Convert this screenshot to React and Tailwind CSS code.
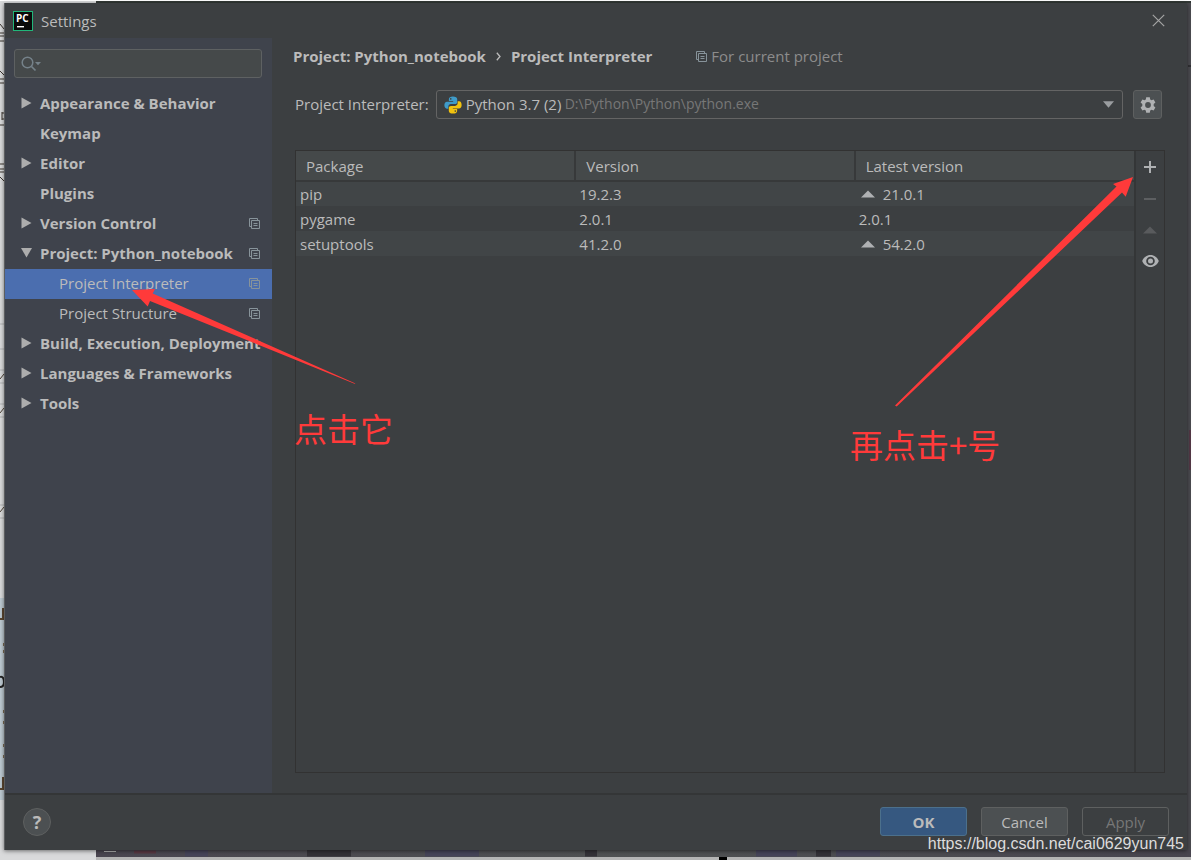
import { useState } from "react";

const TREE = [
  { label: "Appearance & Behavior", arrow: "right" },
  { label: "Keymap" },
  { label: "Editor", arrow: "right" },
  { label: "Plugins" },
  { label: "Version Control", arrow: "right", copy: true },
  { label: "Project: Python_notebook", arrow: "down", copy: true },
  { label: "Project Interpreter", child: true, copy: true },
  { label: "Project Structure", child: true, copy: true },
  { label: "Build, Execution, Deployment", arrow: "right" },
  { label: "Languages & Frameworks", arrow: "right" },
  { label: "Tools", arrow: "right" },
];

const PACKAGES = [
  { name: "pip", version: "19.2.3", latest: "21.0.1", upgrade: true },
  { name: "pygame", version: "2.0.1", latest: "2.0.1", upgrade: false },
  { name: "setuptools", version: "41.2.0", latest: "54.2.0", upgrade: true },
];

function CopyIcon() {
  return (
    <svg width="11" height="11" viewBox="0 0 11 11" fill="none" stroke="#87939a" className="shrink-0" aria-hidden="true">
      <path d="M2.5 8.5H.5V.5H8.5V2.5" />
      <path d="M2.5 2.5H10.5V10.5H2.5Z" />
      <path d="M4.5 5.5H8.5M4.5 7.5H8.5" />
    </svg>
  );
}

function TreeArrow({ direction }) {
  return (
    <svg width="12" height="12" viewBox="0 0 12 12" fill="#adadad" className="shrink-0" aria-hidden="true">
      {direction === "right" && <path d="M1.500 .5L11.500 6L1.500 11.500Z" />}
      {direction === "down" && <path d="M1 1H12L6.500 10.500Z" />}
    </svg>
  );
}

function PyCharmLogo() {
  return (
    <svg width="20" height="20" viewBox="0 0 20 20" aria-hidden="true">
      <rect width="20" height="20" fill="#21b67a" />
      <rect x="1" y="1" width="18" height="18" fill="#0a0a0a" />
      <text x="3" y="11" fill="#fff" fontSize="10" fontWeight="700" fontFamily="Open Sans, sans-serif">PC</text>
      <rect x="4" y="15" width="7" height="1.4" fill="#fff" />
    </svg>
  );
}

function PythonLogo() {
  return (
    <svg width="18" height="18" viewBox="0 0 24 24" className="shrink-0" aria-hidden="true">
      <path fill="#3f9bc9" d="M11.9.6C8.5.6 6.5 1.8 6.5 4V6.6H12.2V7.5H4C1.8 7.5.5 9.3.5 12.1s1.2 4.8 3.3 4.8h2v-2.7c0-2 1.5-3.4 3.4-3.4h5.5c1.7 0 2.9-1.2 2.9-2.9V4c0-2.2-2.2-3.4-5.7-3.4Z" />
      <path fill="#f2c30f" d="M12.1 23.4c3.4 0 5.4-1.2 5.4-3.4v-2.6h-5.7v-.9H20c2.2 0 3.5-1.8 3.5-4.6S22.3 7.1 20.2 7.1h-2v2.7c0 2-1.5 3.4-3.4 3.4H9.3c-1.7 0-2.9 1.2-2.9 2.9V20c0 2.2 2.2 3.4 5.7 3.4Z" />
      <circle cx="9" cy="3.9" r="1.1" fill="#3c3f41" />
      <circle cx="15" cy="20.1" r="1.1" fill="#3c3f41" />
    </svg>
  );
}

function GearIcon() {
  return (
    <svg width="16" height="16" viewBox="0 0 16 16" fill="#afb1b3" fillRule="evenodd" aria-hidden="true">
      <path d="M6.2 .3H9.8L10.2 2.5L11.5 3.2L13.6 2.4L15.4 5.5L13.7 7V9L15.4 10.5L13.6 13.6L11.5 12.8L10.2 13.5L9.8 15.7H6.2L5.8 13.5L4.5 12.8L2.4 13.6L.6 10.5L2.3 9V7L.6 5.5L2.4 2.4L4.5 3.2L5.8 2.5ZM8 5.1A2.9 2.9 0 1 0 8 10.9A2.9 2.9 0 1 0 8 5.1Z" />
    </svg>
  );
}

function UpTriangle({ className }) {
  return (
    <svg width="14" height="8" viewBox="0 0 14 8" className={className} aria-hidden="true">
      <path fill="currentColor" d="M7 .5L14 7.5H0Z" />
    </svg>
  );
}

function Backdrop() {
  return (
    <div className="absolute inset-0 overflow-hidden bg-[#d9dadb]" aria-hidden="true">
      <div className="absolute right-0 top-0 bottom-[3px] left-24 bg-[#4a4a4f]" />
      <div className="absolute bottom-[3px] left-24 right-0 h-[7px] bg-linear-to-r from-[#4a4650] via-[#505253] to-[#48454f]" />
      <div className="absolute bottom-0 left-24 right-0 h-[3px] bg-[#b4b4b4]" />
      <div className="absolute top-0 left-24 right-0 h-[3px] bg-[#323835]" />
      <div className="absolute top-0 left-0 right-0 h-px bg-white" />
      <div className="absolute top-[598px] left-0 h-[202px] w-1 bg-[#bcc8d0]" />
      <svg className="absolute inset-0 h-full w-full" fill="none">
        <path stroke="#3b342f" d="M0 24L4 29M0 33H4M0 36H4M0 41H4M0 71L4 75M0 79H4M0 83H4M2 112V120M2 113H5M2 119H5M0 125H4M0 164H4M0 169H4M0 172H4M0 177L4 181" />
        <path stroke="#b0b2b4" d="M0 324H4M0 349H4M0 370H4M0 383H4M0 404H4M0 417H4M0 505H4M0 518H4" />
        <path stroke="#4b4036" d="M0 379L4 374M0 413L4 408M0 512L4 507" />
        <path stroke="#5a4630" strokeWidth="2" d="M0 619H4M3 608V620M0 789H4M3 777V789" />
        <path stroke="#7a6a52" d="M3.500 643V646M3.500 650V653M3.500 710V713M3.500 721V724M3.500 744V747M3.500 755V758" />
        <path stroke="#222" strokeWidth="2" d="M0 677C3 676 4 679 4 682S3 687 0 687" />
        <path stroke="#b0b0b0" d="M104 851.5H116" />
        <path stroke="#593843" strokeWidth="3" d="M134 852H156" />
        <path stroke="#533846" strokeWidth="2" d="M1190 430V470" />
        <path stroke="#343238" strokeWidth="7" d="M307 853H351M585 853H597M816 853H831" />
        <path stroke="#464459" strokeWidth="7" d="M185 853H208M425 853H479M756 853H797M836 853H880" />
        <path stroke="#161618" d="M1188 66H1191" />
        <path stroke="#000" strokeWidth="3" d="M719 858.5H727" />
      </svg>
    </div>
  );
}

function Annotations() {
  return (
    <>
      <svg className="pointer-events-none absolute inset-0 h-full w-full" fill="#ff3a3a" aria-hidden="true">
        <path d="M132 290L155 289L152.7 293.5L355.5 383.5L354.5 383.7L150 301L147.7 306.5Z" />
        <path d="M1133 177L1113 184L1116.5 186.5L895 405.5L896.7 406.5L1122 192.5L1125.7 196.7Z" />
      </svg>
      <p className="pointer-events-none absolute left-[294px] top-[408px] font-['Noto_Sans_CJK_SC',sans-serif] text-[33px] leading-10 text-[#ff3a3a]">点击它</p>
      <p className="pointer-events-none absolute left-[850px] top-[424px] font-['Noto_Sans_CJK_SC',sans-serif] text-[33px] leading-10 text-[#ff3a3a]">再点击+号</p>
      <p className="pointer-events-none absolute bottom-1.5 right-[7px] font-['Liberation_Sans',sans-serif] text-base leading-5 text-[#dcdcdc]">
        https://blog.csdn.net/cai0629yun745
      </p>
    </>
  );
}

function Sidebar({ selected, onSelect }) {
  return (
    <aside className="flex w-[267px] shrink-0 flex-col bg-[#3f434c] pt-[11px]">
      <label className="ml-[9px] mr-2.5 flex h-[29px] items-center rounded-[3px] border border-[#5e6162] bg-[#45494a] px-1.5">
        <svg width="21" height="16" viewBox="0 0 21 16" fill="none" className="shrink-0" aria-hidden="true">
          <circle cx="6.5" cy="6.5" r="5.3" stroke="#75828a" strokeWidth="1.5" />
          <path d="M10.5 10.5L14.5 14.5" stroke="#75828a" strokeWidth="1.7" />
          <path d="M14 6H20L17 9.2Z" fill="#75828a" />
        </svg>
        <input type="text" aria-label="Search settings" className="w-full min-w-0 bg-transparent pl-1 outline-none" />
      </label>
      <nav className="mt-[11px] flex flex-col">
        {TREE.map((item) => (
          <button
            key={item.label}
            type="button"
            onClick={() => onSelect(item.label)}
            className={
              "flex h-[30px] items-center gap-2 whitespace-nowrap pb-0.5 pr-3 text-left " +
              (item.child ? "pl-[54px] " : "pl-[15px] font-bold ") +
              (selected === item.label ? "bg-[#4b6eaf]" : "")
            }
          >
            {!item.child && <TreeArrow direction={item.arrow} />}
            <span className="min-w-0 flex-1">{item.label}</span>
            {item.copy && <CopyIcon />}
          </button>
        ))}
      </nav>
    </aside>
  );
}

function PackageTable() {
  return (
    <div className="flex flex-1 border border-[#323232]">
      <div className="flex-1 border-r-2 border-[#343637]">
        <table className="w-full table-fixed border-collapse text-left">
          <thead>
            <tr className="h-[30px] border-b-2 border-[#37393a] bg-[#45494a]">
              <th className="border-r-2 border-[#37393a] pl-2.5 font-normal">Package</th>
              <th className="border-r-2 border-[#37393a] pl-2.5 font-normal">Version</th>
              <th className="pl-2.5 font-normal">Latest version</th>
            </tr>
          </thead>
          <tbody>
            {PACKAGES.map((p) => (
              <tr key={p.name} className="h-[25px] odd:bg-[#414547]">
                <td className="pl-1">{p.name}</td>
                <td className="pl-1">{p.version}</td>
                <td className="pl-1">
                  <span className="flex items-center gap-2">
                    {p.upgrade && <UpTriangle className="ml-0.5 text-[#afb1b3]" />}
                    {p.latest}
                  </span>
                </td>
              </tr>
            ))}
          </tbody>
        </table>
      </div>
      <div className="flex w-7 flex-col items-center">
        <button type="button" aria-label="Install" className="flex h-8 w-full items-center justify-center">
          <svg width="12" height="12" viewBox="0 0 12 12" fill="#afb1b3" aria-hidden="true"><path d="M5 0H7V5H12V7H7V12H5V7H0V5H5Z" /></svg>
        </button>
        <button type="button" aria-label="Uninstall" className="flex h-[31px] w-full items-center justify-center">
          <svg width="12" height="2" viewBox="0 0 12 2" fill="#5d5f61" aria-hidden="true"><path d="M0 0H12V2H0Z" /></svg>
        </button>
        <button type="button" aria-label="Upgrade" className="flex h-8 w-full items-center justify-center">
          <UpTriangle className="text-[#595b5d]" />
        </button>
        <button type="button" aria-label="Show early releases" className="flex h-[30px] w-full items-center justify-center">
          <svg width="17" height="12" viewBox="0 0 17 12" fill="none" aria-hidden="true">
            <path fill="#afb1b3" fillRule="evenodd" d="M8.5 0C4.7 0 1.6 2.4 .2 6C1.6 9.6 4.7 12 8.5 12S15.4 9.6 16.8 6C15.4 2.4 12.3 0 8.5 0ZM8.5 1.7A4.3 4.3 0 1 1 8.5 10.3A4.3 4.3 0 1 1 8.5 1.7Z" />
            <circle cx="8.5" cy="6" r="2.5" fill="#afb1b3" />
          </svg>
        </button>
      </div>
    </div>
  );
}

export default function App() {
  const [selected, setSelected] = useState("Project Interpreter");
  return (
    <div className="flex min-h-screen bg-white pb-[3px] pr-[3px] font-['Open_Sans','Noto_Sans_CJK_SC',sans-serif] text-[15px] leading-5 text-[#bbbbbb]">
      <div className="relative flex flex-1 pb-2.5 pl-1 pr-1 pt-[3px]">
        <Backdrop />
        <div className="relative flex min-w-0 flex-1 flex-col border-l border-[#5c5e60] bg-[#3c3f41] shadow-[0_1px_4px_rgba(0,0,0,0.5)]">
          <header className="flex h-[35px] items-center gap-2 pl-2 pr-[22px]">
            <PyCharmLogo />
            <h1 className="flex-1">Settings</h1>
            <button type="button" aria-label="Close">
              <svg width="13" height="13" viewBox="0 0 13 13" stroke="#a4a4a4" strokeWidth="1.2" aria-hidden="true"><path d="M.8 .8L12.2 12.2M12.2 .8L.8 12.2" /></svg>
            </button>
          </header>
          <div className="flex flex-1">
            <Sidebar selected={selected} onSelect={setSelected} />
            <main className="flex min-w-0 flex-1 flex-col pb-5 pl-[21px] pr-[22px] pt-2">
              <div className="flex items-center">
                <h2 className="flex items-center font-bold">
                  <span>Project: Python_notebook</span>
                  <svg width="5" height="9" viewBox="0 0 5 9" fill="none" stroke="#bbbbbb" strokeWidth="1.3" className="mx-2.5" aria-hidden="true"><path d="M.8 .8L4 4.5L.8 8.2" /></svg>
                  <span>Project Interpreter</span>
                </h2>
                <span className="ml-11 flex items-center gap-1 text-[#8c8c8c]">
                  <CopyIcon />
                  For current project
                </span>
              </div>
              <div className="flex flex-1 flex-col pl-0.5 pt-6">
                <div className="flex items-center">
                  <label htmlFor="interpreter" className="pb-0.5 pr-[7px]">Project Interpreter:</label>
                  <div className="flex h-[29px] flex-1 items-center rounded-[3px] border border-[#646464] pl-[7px] pr-2">
                    <PythonLogo />
                    <select id="interpreter" className="ml-1 appearance-none bg-transparent pb-0.5 outline-none">
                      <option>Python 3.7 (2)</option>
                    </select>
                    <span className="ml-[3px] flex-1 pb-0.5 text-sm text-[#777777]">D:\Python\Python\python.exe</span>
                    <svg width="11" height="7" viewBox="0 0 11 7" fill="#9a9da0" aria-hidden="true"><path d="M0 .3H11L5.5 6.7Z" /></svg>
                  </div>
                  <button type="button" aria-label="Interpreter options" className="ml-2.5 mr-[3px] flex h-[29px] w-[29px] items-center justify-center rounded-[3px] border border-[#5e6060] bg-[#4c5052]">
                    <GearIcon />
                  </button>
                </div>
                <div className="mt-[31px] flex flex-1">
                  <PackageTable />
                </div>
              </div>
            </main>
          </div>
          <footer className="flex h-[57px] items-center gap-3.5 border-t-2 border-[#343637] pb-0.5 pl-[18px] pr-[18px]">
            <button type="button" aria-label="Help" className="mr-auto flex h-7 w-7 items-center justify-center rounded-full border border-[#5e6060] bg-[#4c5052] text-lg font-bold">
              ?
            </button>
            <button type="button" className="h-[29px] w-[87px] rounded-[3px] border border-[#4c708c] bg-[#365880] font-bold">OK</button>
            <button type="button" className="h-[29px] w-[87px] rounded-[3px] border border-[#5e6060] bg-[#4c5052]">Cancel</button>
            <button type="button" disabled className="h-[29px] w-[87px] rounded-[3px] border border-[#5e6060] text-[#777777]">Apply</button>
          </footer>
        </div>
        <Annotations />
      </div>
    </div>
  );
}
